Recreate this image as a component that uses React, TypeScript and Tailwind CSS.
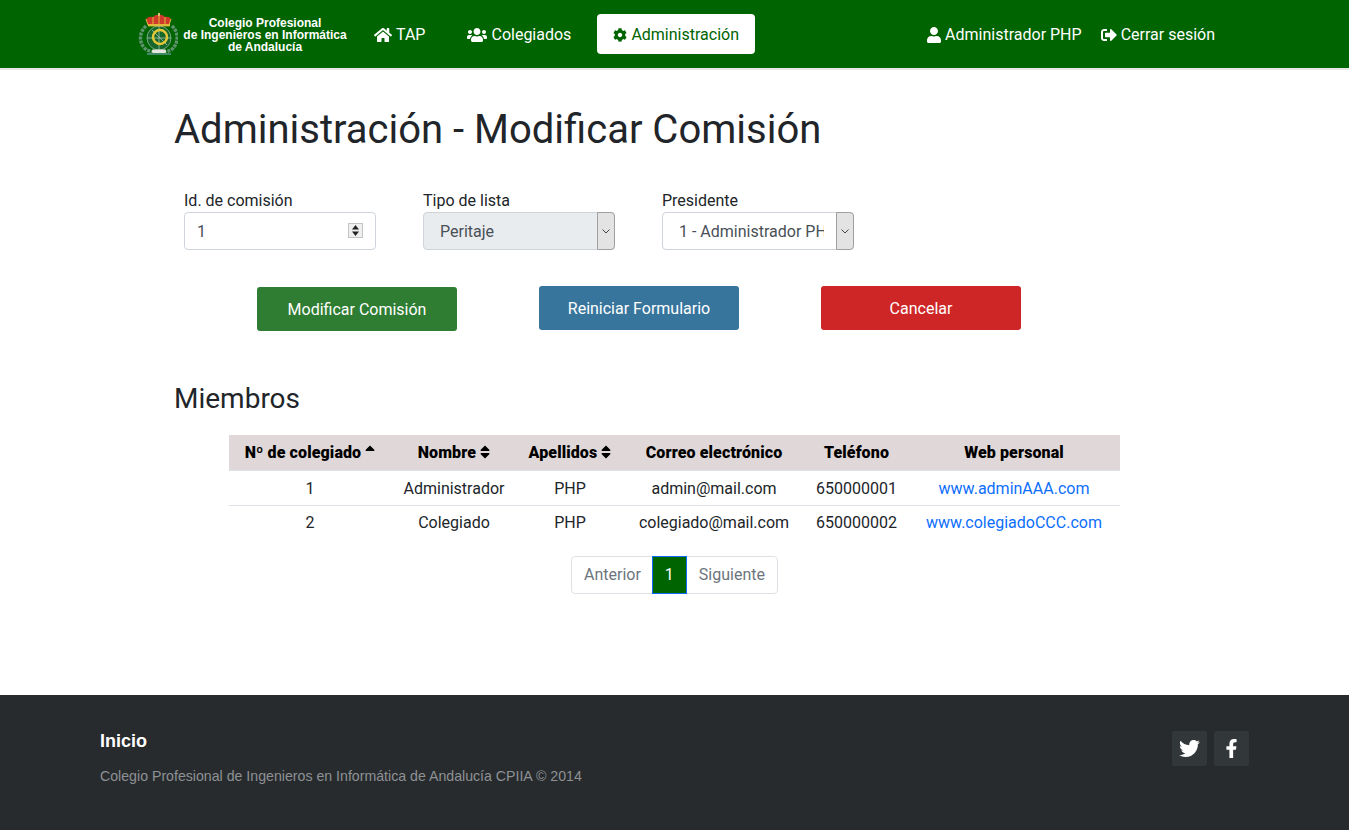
import {
  FaCog,
  FaFacebookF,
  FaHome,
  FaSignOutAlt,
  FaSort,
  FaSortUp,
  FaTwitter,
  FaUser,
  FaUsers,
} from "react-icons/fa";

function Crest() {
  return (
    <svg width="40" height="42" viewBox="0 0 40 42" className="shrink-0">
      {/* laurel */}
      <path d="M8 13 C1 19 0 31 9 37 L14 39" fill="none" stroke="#5f9470" strokeWidth="3.4" strokeDasharray="3 1" />
      <path d="M34 13 C41 19 41 31 33 37 L28 39" fill="none" stroke="#5f9470" strokeWidth="3.4" strokeDasharray="3 1" />
      {/* escudo */}
      <circle cx="21" cy="25" r="12" fill="#17662c" stroke="#8fb59a" strokeWidth="0.8" />
      <path d="M9 25 H33 M21 13 V37 M14 17 L29 32" stroke="#a8c4ae" strokeWidth="0.8" />
      <circle cx="22" cy="24" r="7" fill="none" stroke="#e6c836" strokeWidth="2.4" />
      {/* corona */}
      <path d="M10 12 L8 6 Q11 3 15 4 Q18 1 21 2 Q24 1 27 4 Q31 3 33 6 L31 12 Z" fill="#d03a2a" />
      <path d="M10 12 L8 6 M15 4 L15 12 M21 2 L21 12 M27 4 L27 12 M33 6 L31 12" stroke="#e1b93a" strokeWidth="1" />
      <rect x="20" y="0" width="2" height="3" fill="#d8c070" />
      <rect x="10" y="11" width="22" height="2.4" fill="#e1b93a" />
      {/* cinta */}
      <rect x="14" y="36.5" width="14" height="3.5" rx="1" fill="#e6e6e0" />
      <path d="M9 41 H33" stroke="#7fb0c8" strokeWidth="1" />
    </svg>
  );
}

function NavLink({ icon, label, active }: { icon: React.ReactNode; label: string; active?: boolean }) {
  return (
    <a
      href="#"
      className={`flex h-10 items-center gap-1 rounded px-4 pt-px text-base ${
        active ? "bg-white text-[#006400]" : "text-white"
      }`}
    >
      {icon}
      {label}
    </a>
  );
}

function SelectBox({ value, disabled }: { value: string; disabled?: boolean }) {
  return (
    <div className="relative h-[38px] w-[192px]">
      <select
        disabled={disabled}
        defaultValue={value}
        className={`h-full w-full appearance-none rounded border border-[#ced4da] pt-px pr-[29px] pl-4 text-base text-[#495057] opacity-100 ${
          disabled ? "bg-[#e9ecef]" : "bg-white"
        }`}
      >
        <option>{value}</option>
      </select>
      <span className="pointer-events-none absolute top-0 right-0 flex h-full w-[18px] items-center justify-center rounded-r border border-[#a0a0a0] bg-[#e3e3e3]">
        <svg width="8" height="5" viewBox="0 0 8 5">
          <path d="M0.5 0.5 L4 4 L7.5 0.5" fill="none" stroke="#444" strokeWidth="1" />
        </svg>
      </span>
    </div>
  );
}

const members = [
  { num: 1, nombre: "Administrador", apellidos: "PHP", correo: "admin@mail.com", tel: "650000001", web: "www.adminAAA.com" },
  { num: 2, nombre: "Colegiado", apellidos: "PHP", correo: "colegiado@mail.com", tel: "650000002", web: "www.colegiadoCCC.com" },
];

export default function App() {
  return (
    <div className="flex min-h-[830px] flex-col bg-white font-['Roboto',sans-serif] text-[#212529]">
      {/* Navbar */}
      <nav className="flex h-[70px] items-center border-b-2 border-[#e7e7e7] bg-[#006400] pr-[134px] pl-[138px]">
        <a href="#" className="flex items-center gap-[5px]">
          <Crest />
          <span className="mt-px w-[164px] text-center font-['Liberation_Sans',sans-serif] text-xs leading-[12px] font-bold text-white">
            Colegio Profesional
            <br />
            de Ingenieros en Informática
            <br />
            de Andalucía
          </span>
        </a>
        <div className="ml-[11px] flex items-center gap-[10px]">
          <NavLink icon={<FaHome size={18} />} label="TAP" />
          <NavLink icon={<FaUsers size={20} />} label="Colegiados" />
          <NavLink icon={<FaCog size={14} />} label="Administración" active />
        </div>
        <div className="ml-auto flex items-center gap-[19px] pt-px text-base text-white">
          <a href="#" className="flex items-center gap-1">
            <FaUser className="h-4 w-3.5" />
            Administrador PHP
          </a>
          <a href="#" className="flex items-center gap-1">
            <FaSignOutAlt size={16} />
            Cerrar sesión
          </a>
        </div>
      </nav>

      {/* Contenido */}
      <main className="flex-1 pr-[229px] pl-[174px]">
        <h1 className="mt-9 text-[40px] leading-[48px] font-normal">Administración - Modificar Comisión</h1>

        <div className="mt-[35px] ml-[10px] flex gap-[47px]">
          <label className="flex flex-col">
            <span className="text-base leading-[23px]">Id. de comisión</span>
            <div className="relative h-[38px] w-[192px]">
              <input
                type="number"
                defaultValue={1}
                className="h-full w-full rounded border border-[#ced4da] pr-[30px] pl-3 text-base text-[#495057] [&::-webkit-inner-spin-button]:appearance-none"
              />
              <span className="pointer-events-none absolute top-[11px] right-[13px] flex h-[15px] w-[15px] flex-col gap-px border border-[#c4c4c4] bg-[#efefef]">
                <svg viewBox="0 0 13 6" className="h-1.5 w-full">
                  <path d="M3 5.5 L6.5 1 L10 5.5 Z" fill="#222" />
                </svg>
                <svg viewBox="0 0 13 6" className="h-1.5 w-full">
                  <path d="M3 0.5 L6.5 5 L10 0.5 Z" fill="#222" />
                </svg>
              </span>
            </div>
          </label>
          <label className="flex flex-col">
            <span className="text-base leading-[23px]">Tipo de lista</span>
            <SelectBox value="Peritaje" disabled />
          </label>
          <label className="flex flex-col">
            <span className="text-base leading-[23px]">Presidente</span>
            <SelectBox value="1 - Administrador PHP" />
          </label>
        </div>

        <div className="mt-9 ml-[83px] flex items-start gap-[82px]">
          <button className="mt-px h-11 w-[200px] rounded-[3px] bg-[#2e7d32] pt-px text-base text-white">Modificar Comisión</button>
          <button className="h-11 w-[200px] rounded-[3px] bg-[#38759d] pt-px text-base text-white">Reiniciar Formulario</button>
          <button className="h-11 w-[200px] rounded-[3px] bg-[#ce2626] pt-px text-base text-white">Cancelar</button>
        </div>

        <h2 className="mt-[51px] text-[28px] leading-[34px] font-normal">Miembros</h2>

        <table className="mt-[19px] ml-[55px] w-[891px] table-fixed border-collapse text-center text-base">
          <colgroup>
            <col className="w-[162px]" />
            <col className="w-[126px]" />
            <col className="w-[106px]" />
            <col className="w-[182px]" />
            <col className="w-[103px]" />
            <col className="w-[212px]" />
          </colgroup>
          <thead>
            <tr className="h-[35px] border-b border-[#dee2e6] bg-[#e0d8d8] tracking-[0.12px] text-black">
              <th className="pt-0.5 font-black">
                Nº de colegiado <FaSortUp className="inline h-4 w-2.5 align-[-2px]" />
              </th>
              <th className="pt-0.5 font-black">
                Nombre <FaSort className="inline h-4 w-2.5 align-[-2px]" />
              </th>
              <th className="pt-0.5 font-black">
                Apellidos <FaSort className="inline h-4 w-2.5 align-[-2px]" />
              </th>
              <th className="pt-0.5 font-black">Correo electrónico</th>
              <th className="pt-0.5 font-black">Teléfono</th>
              <th className="pt-0.5 font-black">Web personal</th>
            </tr>
          </thead>
          <tbody>
            {members.map((m) => (
              <tr key={m.num} className="h-[35px] border-b border-[#dee2e6] last:border-b-0 [&:first-child>td]:pt-0.5">
                <td>{m.num}</td>
                <td>{m.nombre}</td>
                <td>{m.apellidos}</td>
                <td>{m.correo}</td>
                <td>{m.tel}</td>
                <td>
                  <a href="#" className="text-[#0d6efd]">
                    {m.web}
                  </a>
                </td>
              </tr>
            ))}
          </tbody>
        </table>

        <div className="mt-4 ml-[397px] flex h-[38px] w-fit text-base">
          <a href="#" className="flex items-center rounded-l border border-[#dee2e6] pr-[11px] pl-3 text-[#6c757d]">
            Anterior
          </a>
          <a href="#" className="z-10 -ml-px flex items-center border border-[#0d6efd] bg-[#006400] px-3 text-white">
            1
          </a>
          <a href="#" className="-ml-px flex items-center rounded-r border border-[#dee2e6] px-3 text-[#6c757d]">
            Siguiente
          </a>
        </div>
      </main>

      {/* Footer */}
      <footer className="flex h-[135px] justify-between bg-[#272b2e] pt-9 pr-[100px] pl-[100px]">
        <div>
          <a href="#" className="block font-['Liberation_Sans',sans-serif] text-lg leading-5 font-bold text-white">
            Inicio
          </a>
          <p className="mt-[15px] font-['Liberation_Sans',sans-serif] text-[14.16px] leading-5 text-[#8e9194]">
            Colegio Profesional de Ingenieros en Informática de Andalucía CPIIA © 2014
          </p>
        </div>
        <div className="flex gap-[7px]">
          <a href="#" className="flex size-[35px] items-center justify-center rounded-[2px] bg-[#32373a] text-white">
            <FaTwitter size={21} />
          </a>
          <a href="#" className="flex size-[35px] items-center justify-center rounded-[2px] bg-[#32373a] text-white">
            <FaFacebookF size={19} />
          </a>
        </div>
      </footer>
    </div>
  );
}
